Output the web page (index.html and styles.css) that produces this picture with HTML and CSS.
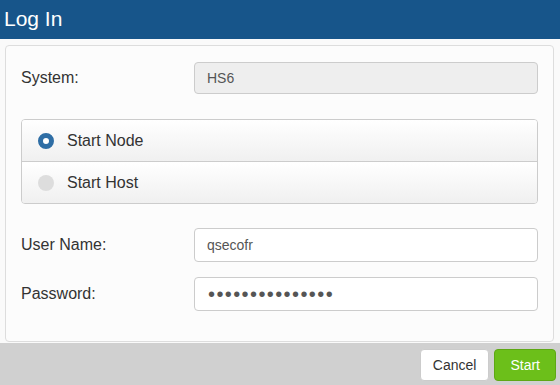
FILE: index.html
```html
<!DOCTYPE html>
<html lang="en">
<head>
    <meta charset="UTF-8">
    <title>Log In</title>
    <link rel="stylesheet" href="styles.css">
</head>
<body>
    <div class="header">
        <h1>Log In</h1>
    </div>
    <div class="content">
        <form class="panel">
            <div class="row">
                <label for="system">System:</label>
                <input type="text" id="system" value="HS6" disabled>
            </div>

            <div class="radio-group">
                <label class="radio-row">
                    <span class="radio checked"></span>
                    Start Node
                </label>
                <label class="radio-row">
                    <span class="radio"></span>
                    Start Host
                </label>
            </div>

            <div class="row">
                <label for="username">User Name:</label>
                <input type="text" id="username" value="qsecofr">
            </div>
            <div class="row">
                <label for="password">Password:</label>
                <input type="password" id="password" value="passwordpasswor">
            </div>
        </form>
    </div>
    <div class="footer">
        <button class="btn">Cancel</button>
        <button class="btn btn-start">Start</button>
    </div>
</body>
</html>
```

FILE: styles.css
```css
body {
    margin: 0;
    background-color: #fafafa;
    color: #333;
    font-family: "Liberation Sans", Arial, sans-serif;
    width: 560px;
    height: 385px;
    display: flex;
    flex-direction: column;
    overflow: hidden;
}
.header {
    background-color: #17558a;
    height: 39px;
    padding-left: 4px;
}
.header h1 {
    margin: 0;
    color: #fff;
    font-size: 21px;
    font-weight: normal;
    line-height: 37px;
}
.content {
    padding: 6px 6px 1px 5px;
}
.panel {
    background-color: #fcfcfc;
    border: 1px solid #ddd;
    border-radius: 4px;
    padding: 16px 15px 30px 15px;
    display: flex;
    flex-direction: column;
    gap: 15px;
}
.row {
    display: flex;
    align-items: center;
}
.row label {
    width: 173px;
    font-size: 16px;
}
.row input {
    flex: 1;
    height: 34px;
    box-sizing: border-box;
    border: 1px solid #ccc;
    border-radius: 4px;
    background-color: #fff;
    padding: 0 12px;
    font-family: "Liberation Sans", Arial, sans-serif;
    font-size: 14px;
    color: #555;
}
.row input:disabled {
    background-color: #eee;
    height: 32px;
}
.row input[type="password"] {
    font-size: 20px;
    letter-spacing: 1.4px;
    padding-left: 13px;
}
.radio-group {
    margin: 10px 0 9px;
    border: 1px solid #ccc;
    border-radius: 4px;
    overflow: hidden;
}
.radio-row {
    display: flex;
    align-items: center;
    height: 41px;
    padding-left: 16px;
    font-size: 16px;
    background: linear-gradient(#ffffff, #f0f0f0);
}
.radio-row + .radio-row {
    border-top: 1px solid #ccc;
}
.radio {
    width: 16px;
    height: 16px;
    border-radius: 50%;
    background-color: #ddd;
    margin-right: 13px;
    box-sizing: border-box;
}
.radio.checked {
    background-color: #fff;
    border: 5px solid #2f6ea5;
}
.footer {
    flex: 1;
    background-color: #d0d0d0;
    display: flex;
    justify-content: flex-end;
    align-items: flex-start;
    gap: 5px;
    padding: 6px 4px 0 0;
}
.btn {
    height: 32px;
    padding: 0 12px;
    border: 1px solid #ccc;
    border-radius: 4px;
    background-color: #fff;
    color: #333;
    font-family: "Liberation Sans", Arial, sans-serif;
    font-size: 14px;
}
.btn-start {
    background-color: #6cbf1a;
    border-color: #5ea814;
    color: #fff;
    padding: 0 15px;
}
```
